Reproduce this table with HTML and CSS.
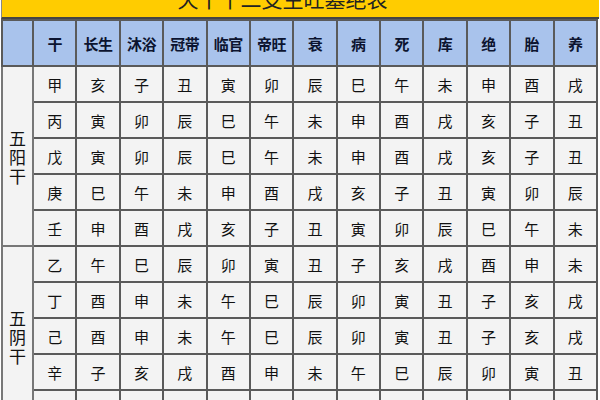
FILE: index.html
```html
<!DOCTYPE html>
<html lang="zh">
<head>
<meta charset="utf-8">
<link rel="stylesheet" href="styles.css">
</head>
<body>
<div class="sheet">
  <div class="title"><span class="title-text">天干十二支生旺墓绝表</span></div>
  <table class="grid">
    <colgroup>
      <col class="c-group">
      <col><col><col><col><col><col><col><col><col><col><col><col><col>
    </colgroup>
    <thead>
      <tr>
        <th></th><th>干</th><th>长生</th><th>沐浴</th><th>冠带</th><th>临官</th><th>帝旺</th><th>衰</th><th>病</th><th>死</th><th>库</th><th>绝</th><th>胎</th><th>养</th>
      </tr>
    </thead>
    <tbody>
      <tr><td class="group" rowspan="5">五<br>阳<br>干</td><td>甲</td><td>亥</td><td>子</td><td>丑</td><td>寅</td><td>卯</td><td>辰</td><td>巳</td><td>午</td><td>未</td><td>申</td><td>酉</td><td>戌</td></tr>
      <tr><td>丙</td><td>寅</td><td>卯</td><td>辰</td><td>巳</td><td>午</td><td>未</td><td>申</td><td>酉</td><td>戌</td><td>亥</td><td>子</td><td>丑</td></tr>
      <tr><td>戊</td><td>寅</td><td>卯</td><td>辰</td><td>巳</td><td>午</td><td>未</td><td>申</td><td>酉</td><td>戌</td><td>亥</td><td>子</td><td>丑</td></tr>
      <tr><td>庚</td><td>巳</td><td>午</td><td>未</td><td>申</td><td>酉</td><td>戌</td><td>亥</td><td>子</td><td>丑</td><td>寅</td><td>卯</td><td>辰</td></tr>
      <tr><td>壬</td><td>申</td><td>酉</td><td>戌</td><td>亥</td><td>子</td><td>丑</td><td>寅</td><td>卯</td><td>辰</td><td>巳</td><td>午</td><td>未</td></tr>
      <tr><td class="group" rowspan="5">五<br>阴<br>干</td><td>乙</td><td>午</td><td>巳</td><td>辰</td><td>卯</td><td>寅</td><td>丑</td><td>子</td><td>亥</td><td>戌</td><td>酉</td><td>申</td><td>未</td></tr>
      <tr><td>丁</td><td>酉</td><td>申</td><td>未</td><td>午</td><td>巳</td><td>辰</td><td>卯</td><td>寅</td><td>丑</td><td>子</td><td>亥</td><td>戌</td></tr>
      <tr><td>己</td><td>酉</td><td>申</td><td>未</td><td>午</td><td>巳</td><td>辰</td><td>卯</td><td>寅</td><td>丑</td><td>子</td><td>亥</td><td>戌</td></tr>
      <tr><td>辛</td><td>子</td><td>亥</td><td>戌</td><td>酉</td><td>申</td><td>未</td><td>午</td><td>巳</td><td>辰</td><td>卯</td><td>寅</td><td>丑</td></tr>
      <tr><td>癸</td><td>卯</td><td>寅</td><td>丑</td><td>子</td><td>亥</td><td>戌</td><td>酉</td><td>申</td><td>未</td><td>午</td><td>巳</td><td>辰</td></tr>
    </tbody>
  </table>
</div>
</body>
</html>
```

FILE: styles.css
```css
html, body {
  margin: 0;
  padding: 0;
  background: #ffffff;
  overflow: hidden;
}
body {
  font-family: "Noto Sans CJK SC", "Noto Sans", sans-serif;
  color: #111111;
}
.sheet {
  width: 598px;
  margin-left: 1px;
}
.title {
  height: 17px;
  background: #ffcc00;
  border-left: 1px solid #888;
  border-bottom: 2px solid #444;
  overflow: hidden;
  text-align: center;
  padding-right: 36px;
}
.title-text {
  display: block;
  margin-top: -14px;
  font-size: 21px;
  line-height: 24px;
  color: #222;
}
.grid {
  width: 597px;
  table-layout: fixed;
  border-collapse: collapse;
}
.c-group {
  width: 31px;
}
.grid th,
.grid td {
  border: 2px solid #5a5a5a;
  text-align: center;
  vertical-align: middle;
  padding: 0;
}
.grid th {
  height: 44px;
  background: #a9c3ec;
  color: #0c1430;
  font-size: 15px;
  font-weight: bold;
  letter-spacing: -0.5px;
}
.grid td {
  height: 34px;
  background: #f3f3f3;
  font-size: 15px;
  color: #111111;
}
.grid td.group {
  font-size: 17px;
  line-height: 19px;
  color: #111;
  border-color: #777;
}
```
